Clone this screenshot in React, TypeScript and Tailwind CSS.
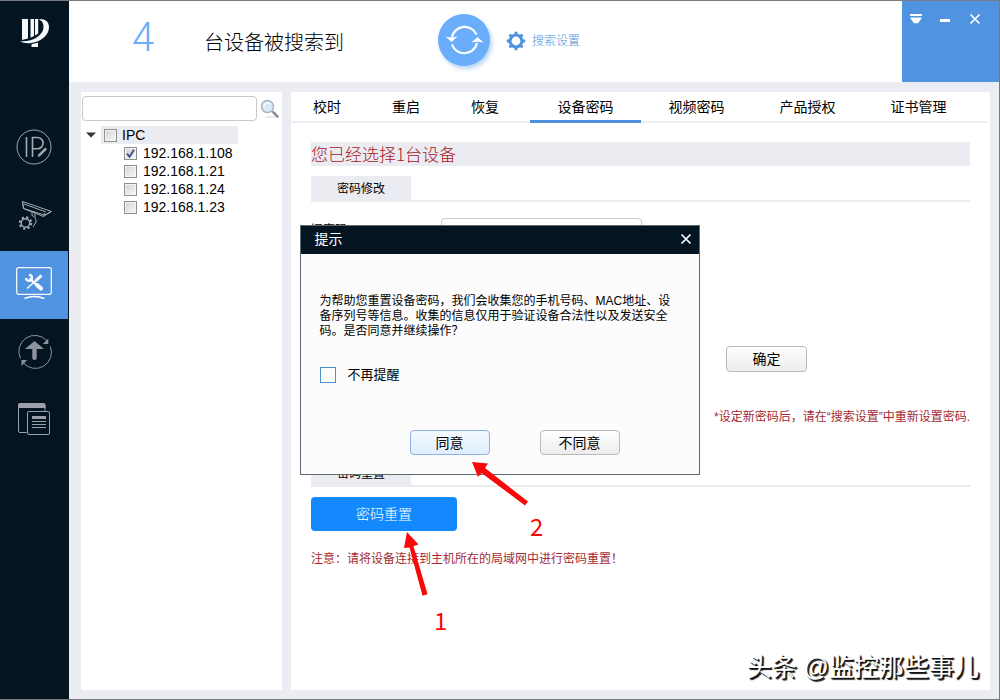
import type { ReactNode } from 'react';

const FONT = "font-['Liberation_Sans','Noto_Sans_CJK_SC',sans-serif]";

function Logo() {
  return (
    <svg viewBox="0 0 30 30" className="h-[30px] w-[30px]" fill="#f4f8fb" aria-label="IP">
      <path d="M2 1h6v19.500l-6 1.500z" />
      <path d="M10.500 1H14v17l-3.500 1.700z" />
      <path d="M15 1h3.200v14.500L15 17.600z" />
      <path d="M19.500 1C26 1 29 4 29 9c0 9-9 15-19 16.200Q4 25.700 0 23.200q10 .8 17-4 6.500-4.500 6.500-10.200c0-4-1.500-6.500-4-7z" />
      <path d="M11.500 26.200l6.500-1.700V29h-6.500z" />
    </svg>
  );
}

function IpEditIcon() {
  return (
    <svg viewBox="0 0 36 36" className="size-9" fill="none" stroke="#a3aab2">
      <circle cx="18" cy="18" r="17" />
      <path d="M10.500 8v20M16.500 28V8.500h5a5.600 5.600 0 0 1 0 11.200h-5" strokeWidth="1.600" />
      <path d="M29.300 18.500l1.700 1.700-7 7-2.300.7.600-2.400z" fill="#a3aab2" stroke="none" />
    </svg>
  );
}

function CameraIcon() {
  return (
    <svg viewBox="0 0 36 32" className="h-8 w-9" fill="none" stroke="#a3aab2">
      <path d="M6.500 2.500l29 10-3.500 2-4.500 3-20-8zM6.500 2.500l1 7 21 6.500 7-3.500M27.500 17.500l1-3.500M8 5l22 8" />
      <path d="M16 12.500v4l2 1M19 14v5q1.500 1 1 4l-3 5" />
      <circle cx="9.500" cy="24" r="4.300" strokeWidth="1.500" />
      <circle cx="9.500" cy="24" r="5.800" strokeWidth="2" strokeDasharray="2.200 2.355" />
    </svg>
  );
}

function ToolsIcon() {
  return (
    <svg viewBox="0 0 36 34" className="h-[34px] w-9" fill="none" stroke="#fff">
      <rect x="0.700" y="1.700" width="34.600" height="26.600" rx="2" strokeWidth="1.200" />
      <path d="M8.500 32.500q9.500-4 20 0" strokeWidth="1.400" />
      <path d="M13.500 12.500L24 22" strokeWidth="2.200" />
      <path d="M21 19l4 3.600" strokeWidth="4" strokeLinecap="round" />
      <path d="M25.500 9.500l-6 5.500" strokeWidth="3" />
      <path d="M20 14.500l-9 8" strokeWidth="1.500" />
      <path d="M13 8.800a3 3 0 1 1-3 3.200" strokeWidth="2.200" />
    </svg>
  );
}

function UpgradeIcon() {
  return (
    <svg viewBox="0 0 36 36" className="size-9" fill="none" stroke="#8d949d">
      <path d="M4.500 25.500A16 16 0 0 1 31 8M34.300 13.500A16 16 0 0 1 7 29.500" />
      <path d="M32.300 5.500v5.500h-5.500zM5.500 33v-6H11z" fill="#8d949d" stroke="none" />
      <path d="M18.500 8l9.500 8h-7.300v9q0 2-2.200 2t-2.200-2v-9H9z" fill="#8f939e" stroke="none" />
    </svg>
  );
}

function LogIcon() {
  return (
    <svg viewBox="0 0 34 34" className="size-[34px]" fill="none" stroke="#9ba1aa">
      <path d="M9.500 30.500H3q-1.500 0-1.500-1.500V3M28 9V3" />
      <path d="M1 6V3q0-2 2-2h23.500q2 0 2 2v3z" fill="#9da0ab" stroke="none" />
      <rect x="10.500" y="9.500" width="22" height="23" rx="1.500" />
      <path d="M15 15.500h14" strokeWidth="3" />
      <path d="M15 19.500h14M15 22.500h14M15 25.500h14" />
    </svg>
  );
}

function RefreshIcon() {
  return (
    <svg viewBox="0 0 52 52" className="size-full" fill="none" stroke="#fff" strokeWidth="2.200">
      <path d="M14 23A13 13 0 0 1 38.500 20.500M39 29A13 13 0 0 1 14 30.500" />
      <path d="M7.500 22.500q6 1.700 12 0l-6 5.500zM33.500 28.500l6-5.500 6 5.500q-6-1.700-12 0z" fill="#fff" stroke="none" />
    </svg>
  );
}

function GearIcon() {
  return (
    <svg viewBox="0 0 20 20" className="size-5" fill="none" stroke="#4f93dc">
      <circle cx="10" cy="10" r="5.900" strokeWidth="3" />
      <path d="M10 3.500V.8M10 16.500v2.700M3.500 10H.8M16.500 10h2.700M5.400 5.400L3.500 3.500M14.600 14.600l1.900 1.900M5.400 14.600l-1.900 1.900M14.600 5.400l1.900-1.900" strokeWidth="2.800" />
    </svg>
  );
}

function SearchIcon() {
  return (
    <svg viewBox="0 0 20 20" className="size-5">
      <ellipse cx="11" cy="18" rx="6" ry="1" fill="#e6e8ea" />
      <path d="M12 12l2 2" stroke="#9a9a9a" strokeWidth="1.500" />
      <path d="M13.500 13.500l4 4" stroke="#8c8c8c" strokeWidth="2.500" strokeLinecap="round" />
      <circle cx="7.500" cy="7.500" r="6" fill="#d9e9f8" stroke="#a9b3bd" strokeWidth="1.500" />
      <path d="M4 7a3.500 3.500 0 0 1 6-2" fill="none" stroke="#fff" strokeWidth="1.500" />
    </svg>
  );
}

function CloseIcon() {
  return (
    <svg viewBox="0 0 12 12" className="size-3" fill="none" stroke="#fff" strokeWidth="1.700">
      <path d="M1.500 1.500l9 9M10.500 1.500l-9 9" />
    </svg>
  );
}

const NAV: { label: string; icon: ReactNode; active?: boolean }[] = [
  { label: '修改IP', icon: <IpEditIcon /> },
  { label: '设备配置', icon: <CameraIcon /> },
  { label: '系统设置', icon: <ToolsIcon />, active: true },
  { label: '设备升级', icon: <UpgradeIcon /> },
  { label: '日志', icon: <LogIcon /> },
];

const DEVICES = [
  { ip: '192.168.1.108', checked: true },
  { ip: '192.168.1.21', checked: false },
  { ip: '192.168.1.24', checked: false },
  { ip: '192.168.1.23', checked: false },
];

function TreeCheck({ id, checked = false }: { id: string; checked?: boolean }) {
  return (
    <span className="grid size-[13px] shrink-0">
      <input
        id={id}
        type="checkbox"
        defaultChecked={checked}
        className="peer col-start-1 row-start-1 size-[13px] appearance-none border border-[#8e8f8f] bg-linear-to-br from-[#cfd3d8] to-[#f8f8f8] shadow-[inset_0_0_0_1px_#f4f4f4]"
      />
      <svg viewBox="0 0 13 13" className="pointer-events-none col-start-1 row-start-1 hidden size-[13px] peer-checked:block" fill="none" stroke="#42538c" strokeWidth="2">
        <path d="M3 6.500l2.500 3.300L10 2.800" />
      </svg>
    </span>
  );
}

function SectionTitle({ children }: { children: ReactNode }) {
  return (
    <div className="border-b-2 border-[#ebecf0]">
      <h2 className="flex h-6 w-[100px] items-center justify-center bg-[#ebecf2] pt-[2px] text-xs">{children}</h2>
    </div>
  );
}

const GRAY_BUTTON =
  'rounded border border-[#b9b9b9] bg-linear-to-b from-white to-[#ececec] text-sm text-black';

function Sidebar() {
  return (
    <aside className="flex w-[69px] shrink-0 flex-col bg-[#041421]">
      <div className="flex h-[114px] justify-center pt-[17px]">
        <Logo />
      </div>
      <nav className="flex flex-col pr-px">
        {NAV.map((item) => (
          <button
            key={item.label}
            aria-label={item.label}
            className={`flex h-[68px] items-center justify-center pb-[5px] ${item.active ? 'bg-[#4f93e1]' : ''}`}
          >
            {item.icon}
          </button>
        ))}
      </nav>
    </aside>
  );
}

function Header() {
  return (
    <header className="flex h-[81px] bg-white">
      <div className="flex grow items-center pb-[3px] pl-[63px]">
        <span className="w-[72px] pb-[5px] text-[40px] leading-10 font-light text-[#6aaefb] font-['Roboto',sans-serif]">4</span>
        <span className="w-[234px] pt-[5px] text-xl font-light">台设备被搜索到</span>
        <button aria-label="刷新" className="size-[52px] rounded-full bg-[#6aaefb] shadow-[2px_3px_4px_#b9d5f5]">
          <RefreshIcon />
        </button>
        <a href="#search" className="ml-4 flex items-center gap-[6px] pt-[2px] text-xs font-light text-[#4f93dc]">
          <GearIcon />
          搜索设置
        </a>
      </div>
      <div className="flex w-[97px] items-start bg-[#4f93e1] pt-3">
        <button aria-label="菜单" className="flex h-3 w-[27px] items-center justify-center">
          <svg viewBox="0 0 12 10" className="h-[10px] w-3" fill="#fff">
            <path d="M0 0h12v2H0zM0.500 3.500h11v1L8 9.200H4L0.500 4.500z" />
          </svg>
        </button>
        <button aria-label="最小化" className="flex h-3 w-8 items-center justify-center">
          <span className="mt-[2px] h-[3px] w-[10px] bg-white" />
        </button>
        <button aria-label="关闭" className="flex h-3 w-7 items-center justify-center">
          <CloseIcon />
        </button>
      </div>
    </header>
  );
}

function DevicePanel() {
  return (
    <section className="w-[201px] shrink-0 bg-white pt-1 pl-px">
      <div className="flex items-center gap-[3px]">
        <input aria-label="搜索" className="h-[25px] w-[175px] rounded border border-[#c9c9cb] px-2 text-sm" />
        <button aria-label="搜索设备">
          <SearchIcon />
        </button>
      </div>
      <div className="flex pt-[5px] text-sm leading-[18px]">
        <span className="flex w-[19px] items-center pl-1">
          <svg viewBox="0 0 10 6" className="h-[6px] w-[10px]" fill="#333">
            <path d="M0 .5h10L5 5.500z" />
          </svg>
        </span>
        <div className="flex w-[137px] items-center gap-[5px] bg-[#ebecf1] pl-[3px]">
          <TreeCheck id="ipc" />
          <label htmlFor="ipc">IPC</label>
        </div>
      </div>
      <ul className="pl-[42px] text-sm leading-[18px]">
        {DEVICES.map((d) => (
          <li key={d.ip} className="flex items-center gap-[6px]">
            <TreeCheck id={d.ip} checked={d.checked} />
            <label htmlFor={d.ip}>{d.ip}</label>
          </li>
        ))}
      </ul>
    </section>
  );
}

function Tabs() {
  return (
    <nav className="mr-[2px] flex h-[31px] border-b-2 border-[#eeeff2] text-sm">
      <div className="flex gap-[11px] pr-[11px] pl-[2px]">
        {['校时', '重启', '恢复'].map((t) => (
          <button key={t} className="w-[68px]">{t}</button>
        ))}
      </div>
      {['设备密码', '视频密码', '产品授权', '证书管理'].map((t) => (
        <button
          key={t}
          className={`-mb-[2px] w-[111px] border-b-3 pt-[2px] ${t === '设备密码' ? 'border-[#4f8fdc]' : 'border-transparent'}`}
        >
          {t}
        </button>
      ))}
    </nav>
  );
}

function PasswordPanel() {
  return (
    <section className="grow bg-white">
      <Tabs />
      <div className="pt-[19px] pr-5 pl-5">
        <p className="h-6 bg-[#ebecf2] text-[17px] leading-6 font-light text-[#a81722] font-['Noto_Sans_CJK_SC',sans-serif]">您已经选择1台设备</p>
        <div className="pt-[10px]">
          <SectionTitle>密码修改</SectionTitle>
        </div>
        <div className="flex h-[144px] items-start pt-4">
          <label htmlFor="old" className="w-[130px] pt-1 text-xs leading-4">旧密码</label>
          <input id="old" type="password" className="h-6 w-[201px] rounded border border-[#c9c9cb] px-2" />
        </div>
        <div className="pl-[415px]">
          <button className={`${GRAY_BUTTON} h-[26px] w-[81px]`}>确定</button>
        </div>
        <p className="h-[89px] pt-[37px] text-right text-xs leading-4 whitespace-nowrap text-[#a52a35]">
          *设定新密码后，请在“搜索设置”中重新设置密码.
        </p>
        <SectionTitle>密码重置</SectionTitle>
        <button className="mt-[10px] h-[34px] w-[146px] rounded bg-[#1389fd] text-sm font-light text-white">密码重置</button>
        <p className="pt-5 text-xs leading-4 text-[#a52a35]">注意：请将设备连接到主机所在的局域网中进行密码重置！</p>
      </div>
    </section>
  );
}

function ConsentDialog() {
  return (
    <div className="absolute inset-0 flex items-center justify-center">
      <div role="dialog" aria-label="提示" className="w-[400px] border border-[#5f6b70] bg-[#fcfcfc]">
        <div className="flex h-7 items-center justify-between bg-[#041421] pr-[7px] pb-[3px] pl-[14px] text-sm text-white">
          <span>提示</span>
          <button aria-label="关闭提示">
            <CloseIcon />
          </button>
        </div>
        <p className="pt-10 pr-6 pl-[19px] text-xs leading-[15px]">
          为帮助您重置设备密码，我们会收集您的手机号码、MAC地址、设<br />
          备序列号等信息。收集的信息仅用于验证设备合法性以及发送安全<br />
          码。是否同意并继续操作？
        </p>
        <div className="flex items-center gap-3 pt-[27px] pl-[19px] text-[13px] leading-[18px]">
          <input id="mute" type="checkbox" className="size-4 appearance-none border border-[#4a90d0] bg-white" />
          <label htmlFor="mute">不再提醒</label>
        </div>
        <div className="flex justify-center gap-[50px] pt-[46px] pb-[19px] pl-[30px]">
          <button className="h-[25px] w-20 rounded border border-[#8db2e3] bg-linear-to-b from-[#f4f9ff] to-[#dfeefe] text-sm">同意</button>
          <button className={`${GRAY_BUTTON} h-[25px] w-20`}>不同意</button>
        </div>
      </div>
    </div>
  );
}

function Annotations() {
  return (
    <div className="pointer-events-none absolute inset-0">
      <svg className="absolute top-[449px] left-[390px] h-[160px] w-[150px]" viewBox="390 450 150 160" fill="#f80808">
        <path d="M472 462l16 1.500-3 4.500 43 33.500-3 4-43.500-32.500-3.500 4z" />
        <path d="M407 532l11.500 12.500-5 1.800 14 48-5 1.500-13-48.300-5.500.6z" />
      </svg>
      <span className="absolute top-[509px] left-[530px] text-2xl leading-8 text-[#f80808] font-['Noto_Sans_CJK_SC',sans-serif]">2</span>
      <span className="absolute top-[603px] left-[434px] text-2xl leading-8 text-[#f80808] font-['Noto_Sans_CJK_SC',sans-serif]">1</span>
      <span className="absolute right-5 bottom-4 text-[25px] leading-8 text-white [text-shadow:1px_1px_0_#111,2px_2px_1px_#111]">
        头条 @监控那些事儿
      </span>
    </div>
  );
}

export default function App() {
  return (
    <div className={`${FONT} relative flex min-h-screen border-t border-r border-b border-[#777b80] bg-[#ecedf2] text-black`}>
      <Sidebar />
      <div className="flex min-w-0 grow flex-col">
        <Header />
        <main className="flex grow gap-[9px] pt-[10px] pr-[9px] pb-[9px] pl-3">
          <DevicePanel />
          <PasswordPanel />
        </main>
      </div>
      <ConsentDialog />
      <Annotations />
    </div>
  );
}
